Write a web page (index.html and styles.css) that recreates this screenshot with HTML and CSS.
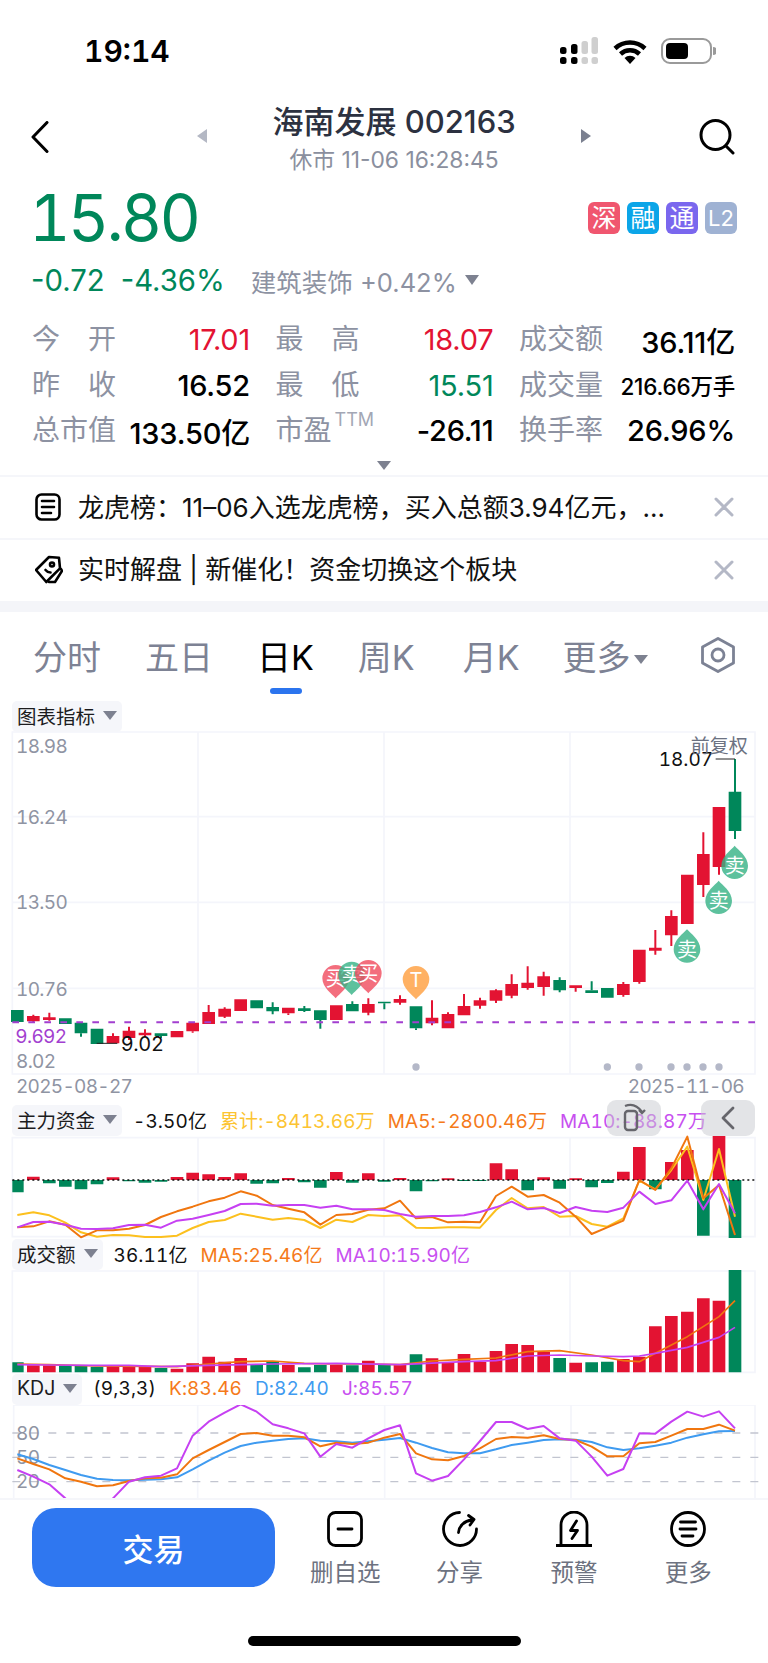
FILE: index.html
```html
<!DOCTYPE html>
<html lang="zh">
<head>
<meta charset="utf-8">
<title>海南发展 002163</title>
<link rel="stylesheet" href="styles.css">
</head>
<body>
<div class="page">
  <header class="status">
    <span class="time">19:14</span>
    <div class="sys">
      <svg class="sig" width="40" height="28" viewBox="0 0 40 28"><g class="k"><rect x="0" y="10" width="6.500" height="7" rx="2.500"/><rect x="11" y="7" width="6.500" height="10" rx="2.500"/><rect x="0" y="20" width="6.500" height="7" rx="2.500"/><rect x="11" y="20" width="6.500" height="7" rx="2.500"/></g><g class="g"><rect x="21.500" y="4" width="6.500" height="13" rx="2.500"/><rect x="31.500" y="0" width="6.500" height="17" rx="2.500"/><rect x="21.500" y="20" width="6.500" height="7" rx="2.500"/><rect x="31.500" y="20" width="6.500" height="7" rx="2.500"/></g></svg>
      <svg class="wifi" width="34" height="25" viewBox="0 0 34 25"><path class="wf" d="M2 9.500a22 22 0 0 1 30 0"/><path class="wf" d="M7.500 15a14 14 0 0 1 19 0"/><path class="k" d="M17 25l-5.500-6a8 8 0 0 1 11 0z"/></svg>
      <svg class="batt" width="55" height="26" viewBox="0 0 55 26"><rect class="bo" x="1" y="1" width="49" height="24" rx="8"/><rect class="k" x="5" y="5" width="22" height="16" rx="4"/><path class="nub" d="M52 9a4 4 0 0 1 0 8z"/></svg>
    </div>
  </header>

  <nav class="nav">
    <svg class="back" width="18" height="32" viewBox="0 0 18 32"><path class="ico" d="M16 1.500L2 16l14 14.500"/></svg>
    <span class="tri-l"></span>
    <div class="titles">
      <div class="title">海南发展 002163</div>
      <div class="sub">休市 11-06 16:28:45</div>
    </div>
    <span class="tri-r"></span>
    <svg class="search" width="36" height="36" viewBox="0 0 36 36"><circle class="ico" cx="16.500" cy="16" r="14.500"/><path class="ico" d="M27 27l7 7"/></svg>
  </nav>

  <section class="quote">
    <div class="price-row">
      <span class="price">15.80</span>
      <div class="badges">
        <span class="badge b1">深</span><span class="badge b2">融</span><span class="badge b3">通</span><span class="badge b4">L2</span>
      </div>
    </div>
    <div class="change-row">
      <span class="chg">-0.72</span><span class="chg">-4.36%</span>
      <span class="sector">建筑装饰 +0.42%</span><span class="tri-d"></span>
    </div>
  </section>

  <section class="stats">
    <div class="stat"><span class="lab wide"><i>今</i><i>开</i></span><span class="val up">17.01</span></div>
    <div class="stat"><span class="lab wide"><i>最</i><i>高</i></span><span class="val up">18.07</span></div>
    <div class="stat"><span class="lab">成交额</span><span class="val">36.11亿</span></div>
    <div class="stat"><span class="lab wide"><i>昨</i><i>收</i></span><span class="val">16.52</span></div>
    <div class="stat"><span class="lab wide"><i>最</i><i>低</i></span><span class="val dn">15.51</span></div>
    <div class="stat"><span class="lab">成交量</span><span class="val small">216.66万手</span></div>
    <div class="stat"><span class="lab">总市值</span><span class="val">133.50亿</span></div>
    <div class="stat"><span class="lab">市盈<sup class="ttm">TTM</sup></span><span class="val">-26.11</span></div>
    <div class="stat"><span class="lab">换手率</span><span class="val">26.96%</span></div>
  </section>
  <div class="expand"><span class="tri-e"></span></div>

  <div class="notice n1">
    <svg class="nicon" width="26" height="28" viewBox="0 0 26 28"><rect class="ico2" x="1.500" y="1.500" width="23" height="25" rx="5"/><path class="ico2" d="M7 8h12M7 14h12M7 20h9"/></svg>
    <span class="ntext">龙虎榜：11–06入选龙虎榜，买入总额3.94亿元，…</span>
    <svg class="close" width="20" height="20" viewBox="0 0 20 20"><path class="cl" d="M2 2l16 16M18 2L2 18"/></svg>
  </div>
  <div class="notice n2">
    <svg class="nicon" width="28" height="30" viewBox="0 0 28 30"><path class="ico2" d="M1 15L14 2l10 .8 1 10.500L11.300 27z"/><path class="ico2" d="M26 14l1 2-7 11h-6"/><circle class="ico2" cx="17" cy="9.500" r="2"/><path class="ico2" d="M10.500 15q2 2.500 5 2.500"/></svg>
    <span class="ntext">实时解盘 | 新催化！资金切换这个板块</span>
    <svg class="close" width="20" height="20" viewBox="0 0 20 20"><path class="cl" d="M2 2l16 16M18 2L2 18"/></svg>
  </div>
  <div class="band"></div>

  <div class="tabs">
    <span class="tab t1">分时</span>
    <span class="tab t2">五日</span>
    <span class="tab t3 on">日K</span>
    <span class="tab t4">周K</span>
    <span class="tab t5">月K</span>
    <span class="tab t6">更多<span class="tri-m"></span></span>
    <svg class="hex" width="34" height="36" viewBox="0 0 34 36"><path class="hx" d="M17 1.500L32.500 10v16L17 34.500 1.500 26V10z"/><circle class="hx" cx="17" cy="18" r="6"/></svg>
  </div>

  <div class="phead h-main"><span class="ctag">图表指标<span class="tri-c"></span></span></div>
  <svg class="chart c-main" width="768" height="342" viewBox="0 96 2304 1026">
    <defs>
      <path id="pd" d="M0 60C-10 48-40 28-40 0A40 40 0 1 1 40 0C40 28 10 48 0 60z"/>
      <path id="pu" d="M0-60C-10-48-40-28-40 0A40 40 0 1 0 40 0C40-28 10-48 0-60z"/>
    </defs>
    <path class="grid" d="M37 96H2265V1122H37zM594 96V1122M1152 96V1122M1710 96V1122M37 350H2265M37 607H2265M37 865H2265"/>
    <text class="ax" x="48" y="160">18.98</text>
    <text class="ax" x="48" y="372">16.24</text>
    <text class="ax" x="48" y="628">13.50</text>
    <text class="ax" x="48" y="887">10.76</text>
    <text class="ax" x="48" y="1104">8.02</text>
    <path class="wr" d="M100 944v22M148 938v24M339 1000v8M387 980v40M435 988v22M578 994v4M626 915v21M674 922v32M865 940v5M1105 895v51M1200 886v28M1296 901v75M1344 937v5M1392 882v36M1440 893v33M1488 868v41M1535 823v72M1583 799v70M1631 815v72M1727 864v11M1870 846v44M1918 846v5M1966 690v74M2014 631v107M2110 397v194M2157 501v23"/>
    <path class="wg" d="M243 1000v10M483 1008v6M818 907v36M913 918v18M961 960v26M1057 904v8M1153 910v18M1248 985v5M1679 832v45M1775 844v27M2205 177v240"/>
    <path class="r" d="M81 948h38v16h-38zM129 952h38v8h-38zM320 1008h38v22h-38zM368 992h38v22h-38zM416 998h38v8h-38zM512 993h38v19h-38zM559 968h38v26h-38zM607 936h38v36h-38zM655 926h38v24h-38zM703 898h38v35h-38zM846 923h38v17h-38zM990 916h38v44h-38zM1086 912h38v26h-38zM1181 897h38v11h-38zM1277 953h38v17h-38zM1325 942h38v43h-38zM1373 918h38v28h-38zM1421 901h38v16h-38zM1469 871h38v31h-38zM1516 852h38v35h-38zM1564 848h38v16h-38zM1612 829h38v32h-38zM1708 856h38v8h-38zM1851 852h38v33h-38zM1899 749h38v97h-38zM1947 743h38v9h-38zM1995 648h38v58h-38zM2043 524h38v148h-38zM2091 462h38v93h-38zM2138 321h38v180h-38z"/>
    <path class="g2" d="M33 930h38v36H33zM177 955h38v17h-38zM224 968h38v32h-38zM272 986h38v46h-38zM464 1000h38v8h-38zM751 901h38v24h-38zM799 921h38v13h-38zM894 925h38v8h-38zM942 931h38v29h-38zM1038 912h38v22h-38zM1134 905h38v5h-38zM1229 919h38v66h-38zM1660 840h38v31h-38zM1756 871h38v8h-38zM1803 864h38v29h-38zM2186 275h38v118h-38z"/>
    <path class="dash" d="M37 967H2265"/>
    <text class="ax pur" x="46" y="1029">9.692</text>
    <path class="tick" d="M290 1030H352M2147 177H2205"/>
    <text class="ax blk big" x="362" y="1052">9.02</text>
    <text class="ax blk" x="1976" y="198">18.07</text>
    <text class="ax fq" x="2072" y="160">前复权</text>
    <g class="dots"><circle cx="1248" cy="1101" r="11"/><circle cx="1822" cy="1101" r="11"/><circle cx="1917" cy="1101" r="11"/><circle cx="2013" cy="1101" r="11"/><circle cx="2061" cy="1101" r="11"/><circle cx="2109" cy="1101" r="11"/><circle cx="2157" cy="1101" r="11"/></g>
    <use class="pin-r" href="#pd" x="1007" y="835"/><text class="pt" x="1007" y="857">买</text>
    <use class="pin-g" href="#pd" x="1055" y="825"/><text class="pt" x="1055" y="847">卖</text>
    <use class="pin-r" href="#pd" x="1105" y="820"/><text class="pt" x="1105" y="842">买</text>
    <use class="pin-o" href="#pd" x="1248" y="838"/><text class="pt" x="1248" y="860">T</text>
    <use class="pin-g" href="#pu" x="2061" y="748"/><text class="pt" x="2061" y="770">卖</text>
    <use class="pin-g" href="#pu" x="2156" y="602"/><text class="pt" x="2156" y="624">卖</text>
    <use class="pin-g" href="#pu" x="2204" y="497"/><text class="pt" x="2204" y="519">卖</text>
  </svg>
  <div class="dates"><span>2025-08-27</span><span>2025-11-06</span></div>

  <div class="phead h-flow">
    <span class="ctag">主力资金<span class="tri-c"></span></span>
    <span class="hv k1">-3.50亿</span>
    <span class="hv yl">累计:-8413.66万</span>
    <span class="hv or">MA5:-2800.46万</span>
    <span class="hv pp">MA10:-88.87万</span>
    <span class="fbtn f1"><svg width="28" height="30" viewBox="0 0 28 30"><rect class="fb" x="5" y="8" width="12" height="19" rx="3"/><path class="fb" d="M5 3q10-4 17 6M19 7l3 3 3-3"/></svg></span>
    <span class="fbtn f2"><svg width="16" height="24" viewBox="0 0 16 24"><path class="fb2" d="M13 2L3 12l10 10"/></svg></span>
  </div>
  <svg class="chart c-flow" width="768" height="101" viewBox="0 141 2304 303">
    <path class="grid" d="M37 143H2265V440H37zM594 143V440M1152 143V440M1710 143V440"/>
    <path class="r" d="M81 260h38v10h-38zM320 262h38v8h-38zM512 261h38v9h-38zM559 248h38v22h-38zM607 253h38v17h-38zM655 261h38v9h-38zM703 250h38v20h-38zM846 264h38v6h-38zM990 246h38v24h-38zM1086 250h38v20h-38zM1181 264h38v6h-38zM1325 265h38v5h-38zM1469 220h38v50h-38zM1516 238h38v32h-38zM1612 262h38v8h-38zM1708 265h38v5h-38zM1851 245h38v25h-38zM1899 171h38v99h-38zM1995 216h38v54h-38zM2043 180h38v90h-38zM2138 138h38v132h-38z"/>
    <path class="g2" d="M37 270h34v37H37zM129 270h38v10h-38zM177 270h38v20h-38zM224 270h38v28h-38zM272 270h38v13h-38zM368 270h38v4h-38zM416 270h38v8h-38zM464 270h38v5h-38zM751 270h38v11h-38zM799 270h38v10h-38zM894 270h38v7h-38zM942 270h38v23h-38zM1038 270h38v8h-38zM1134 270h38v5h-38zM1229 270h38v34h-38zM1277 270h38v4h-38zM1373 270h38v3h-38zM1421 270h38v3h-38zM1564 270h38v31h-38zM1660 270h38v26h-38zM1756 270h38v22h-38zM1803 270h38v9h-38zM1947 270h38v28h-38zM2091 270h38v167h-38zM2186 270h38v174h-38z"/>
    <path class="zero" d="M37 270H2265"/>
    <polyline class="ln ly" points="52,375 100,367 148,376 196,398 243,427 291,440 339,435 387,436 435,441 483,441 531,437 578,414 626,396 674,390 722,371 770,380 818,389 865,384 913,390 961,414 1009,389 1057,396 1105,375 1153,378 1200,376 1248,413 1296,414 1344,412 1392,412 1440,413 1488,360 1535,324 1583,355 1631,351 1679,380 1727,378 1775,402 1822,410 1870,385 1918,272 1966,298 2014,240 2062,170 2110,330 2157,177 2205,380"/>
    <polyline class="ln lo" points="52,412 100,409 148,394 196,404 243,442 291,421 339,421 387,416 435,405 483,381 531,364 578,350 626,334 674,323 722,304 770,317 818,345 865,356 913,367 961,404 1009,375 1057,372 1105,359 1153,355 1200,332 1248,385 1296,381 1344,397 1392,395 1440,397 1488,318 1535,290 1583,320 1631,315 1679,338 1727,380 1775,432 1822,412 1870,392 1918,270 1966,300 2014,235 2062,140 2110,325 2157,285 2205,435"/>
    <polyline class="ln lp" points="52,412 100,396 148,395 196,404 243,416 291,417 339,415 387,405 435,404 483,413 531,392 578,386 626,375 674,363 722,342 770,341 818,347 865,345 913,345 961,353 1009,347 1057,358 1105,358 1153,360 1200,372 1248,380 1296,378 1344,378 1392,376 1440,366 1488,352 1535,335 1583,358 1631,354 1679,369 1727,351 1775,362 1822,366 1870,353 1918,305 1966,342 2014,331 2062,272 2110,358 2157,282 2205,370"/>
  </svg>

  <div class="phead h-vol">
    <span class="ctag">成交额<span class="tri-c"></span></span>
    <span class="hv k1">36.11亿</span>
    <span class="hv or">MA5:25.46亿</span>
    <span class="hv pp">MA10:15.90亿</span>
  </div>
  <svg class="chart c-vol" width="768" height="102" viewBox="0 543 2304 306">
    <path class="grid" d="M37 543H2265V847H37zM594 543V847M1152 543V847M1710 543V847"/>
    <path class="r" d="M81 826h38v21h-38zM129 826h38v21h-38zM320 828h38v19h-38zM368 829h38v18h-38zM416 830h38v17h-38zM512 836h38v11h-38zM559 820h38v27h-38zM607 800h38v47h-38zM655 815h38v32h-38zM703 804h38v43h-38zM846 825h38v22h-38zM990 825h38v22h-38zM1086 812h38v35h-38zM1181 823h38v24h-38zM1277 805h38v42h-38zM1325 818h38v29h-38zM1373 792h38v55h-38zM1421 816h38v31h-38zM1469 783h38v64h-38zM1516 762h38v85h-38zM1564 765h38v82h-38zM1612 785h38v62h-38zM1708 818h38v29h-38zM1851 807h38v40h-38zM1899 800h38v47h-38zM1947 709h38v138h-38zM1995 678h38v169h-38zM2043 665h38v182h-38zM2091 625h38v222h-38zM2138 632h38v215h-38z"/>
    <path class="g2" d="M37 817h34v30H37zM177 826h38v21h-38zM224 828h38v19h-38zM272 830h38v17h-38zM464 834h38v13h-38zM751 823h38v24h-38zM799 815h38v32h-38zM894 832h38v15h-38zM942 825h38v22h-38zM1038 826h38v21h-38zM1134 825h38v22h-38zM1229 793h38v54h-38zM1660 804h38v43h-38zM1756 817h38v30h-38zM1803 815h38v32h-38zM2186 540h38v307h-38z"/>
    <polyline class="ln lo th" points="52,822 148,824 291,828 435,829 531,830 626,822 722,815 818,813 913,820 1009,822 1105,822 1200,824 1296,813 1392,808 1488,804 1583,785 1679,782 1775,795 1870,812 1918,815 1966,790 2062,740 2157,680 2205,632"/>
    <polyline class="ln lp th" points="52,824 148,825 291,826 387,826 483,830 626,826 818,822 1009,820 1200,824 1392,815 1488,812 1583,798 1679,795 1775,798 1870,800 1918,798 1966,790 2062,772 2157,742 2205,712"/>
  </svg>

  <div class="phead h-kdj">
    <span class="ctag">KDJ<span class="tri-c"></span></span>
    <span class="hv k1">(9,3,3)</span>
    <span class="hv or">K:83.46</span>
    <span class="hv bl">D:82.40</span>
    <span class="hv pp">J:85.57</span>
  </div>
  <svg class="chart c-kdj" width="768" height="93" viewBox="0 105 2304 279">
    <path class="grid" d="M41 105H2265V384M41 105V384M593 105V384M1154 105V384M1713 105V384"/>
    <path class="kd" d="M37 189H2304M37 262H2304M37 335H2304"/>
    <text class="ax" x="48" y="209">80</text>
    <text class="ax" x="48" y="282">50</text>
    <text class="ax" x="48" y="355">20</text>
    <polyline class="ln lb" points="52,253 100,267 148,285 196,300 243,315 291,326 339,330 387,331 435,329 483,328 531,322 578,298 626,272 674,248 722,228 770,218 818,212 865,207 913,205 961,212 1009,214 1057,218 1105,214 1153,209 1200,204 1248,218 1296,234 1344,247 1392,250 1440,250 1488,238 1535,225 1583,218 1631,210 1679,208 1727,209 1775,216 1822,232 1870,240 1918,235 1966,227 2014,218 2062,203 2110,193 2157,184 2205,183"/>
    <polyline class="ln lo" points="52,265 100,282 148,298 196,325 243,335 291,349 339,346 387,333 435,325 483,323 531,313 578,265 626,240 674,216 722,192 770,189 818,197 865,197 913,202 961,229 1009,218 1057,222 1105,218 1153,203 1200,192 1248,250 1296,268 1344,271 1392,258 1440,235 1488,207 1535,201 1583,203 1631,196 1679,207 1727,210 1775,230 1822,259 1870,259 1918,220 1966,216 2014,197 2062,177 2110,177 2157,164 2205,182"/>
    <polyline class="ln lp" points="52,300 100,320 148,343 196,385 243,420 291,430 339,385 387,335 435,322 483,317 531,295 578,197 626,155 674,128 722,103 770,125 818,163 865,175 913,190 961,260 1009,222 1057,233 1105,205 1153,180 1200,166 1248,310 1296,332 1344,318 1392,268 1440,213 1488,156 1535,156 1583,177 1631,168 1679,205 1727,212 1775,260 1822,317 1870,297 1918,190 1966,191 2014,155 2062,125 2110,140 2157,124 2205,175"/>
  </svg>

  <footer class="bar">
    <button class="trade">交易</button>
    <div class="acts">
      <div class="act">
        <svg width="36" height="36" viewBox="0 0 36 36"><rect class="ab" x="1.500" y="1.500" width="33" height="33" rx="7"/><path class="ab" d="M11 18h14"/></svg>
        <span>删自选</span>
      </div>
      <div class="act">
        <svg width="36" height="36" viewBox="0 0 36 36"><path class="ab" d="M17.500 1.500A16.500 16.500 0 1 0 34.500 18"/><path class="ab" d="M16.500 21.500C17 15 22 10 30 9M26.500 4.500l5.500 4-4 5.500"/></svg>
        <span>分享</span>
      </div>
      <div class="act">
        <svg width="36" height="36" viewBox="0 0 36 36"><path class="ab" d="M5 34V14a13 13 0 0 1 26 0v20M0 34.500h36"/><path class="ab" d="M20.500 10l-6 9.500h7l-5.500 8"/></svg>
        <span>预警</span>
      </div>
      <div class="act">
        <svg width="36" height="36" viewBox="0 0 36 36"><circle class="ab" cx="18" cy="18" r="16.500"/><path class="ab" d="M10.500 11h15M10 18h16M12 25h11"/></svg>
        <span>更多</span>
      </div>
    </div>
  </footer>
  <div class="home-wrap"><span class="home"></span></div>
</div>
</body>
</html>
```

FILE: styles.css
```css
* { box-sizing: border-box; }
html, body { margin: 0; padding: 0; background: #fff; }
body { font-family: Inter, "Noto Sans CJK SC", sans-serif; color: #000; }
.page { width: 768px; height: 1663px; overflow: hidden; position: relative; background: #fff; }
i { font-style: normal; }
svg { display: block; flex: none; }

/* status bar */
.status { height: 102px; display: flex; align-items: center; justify-content: space-between; padding: 0 52px 0 84px; }
.time { font-size: 30px; font-weight: 600; font-variant-numeric: tabular-nums; }
.sys { display: flex; align-items: center; }
.sig { margin-right: 13px; }
.wifi { margin-right: 14px; }
.k { fill: #000; }
.g { fill: #cfcfcf; }
.wf { fill: none; stroke: #000; stroke-width: 4.500; }
.bo { fill: none; stroke: #9a9a9a; stroke-width: 2; }
.nub { fill: #9a9a9a; }

/* nav */
.nav { height: 76px; display: flex; align-items: flex-start; padding-left: 31px; }
.ico { fill: none; stroke: #000; stroke-width: 3; stroke-linecap: round; stroke-linejoin: round; }
.back { margin-top: 19px; }
.tri-l { width: 0; height: 0; margin: 27px 0 0 148px; border: 7px solid transparent; border-left-width: 0; border-right: 10px solid #b4b8c4; }
.titles { width: 374px; text-align: center; }
.title { font-size: 31px; line-height: 40px; font-weight: 500; color: #2c3140; }
.sub { font-size: 22.800px; line-height: 36px; color: #8a8f9e; }
.tri-r { width: 0; height: 0; margin-top: 27px; border: 7px solid transparent; border-right-width: 0; border-left: 10px solid #7b8090; }
.search { margin: 17px 0 0 108px; }

/* quote */
.quote { padding: 0 31px 0 31px; }
.price-row { height: 80px; display: flex; align-items: center; justify-content: space-between; }
.price { font-size: 64px; line-height: 80px; color: #00875a; letter-spacing: -2.800px; margin-left: -2px; font-variant-numeric: tabular-nums; }
.badges { display: flex; gap: 7px; }
.badge { width: 32px; height: 32px; border-radius: 6px; color: #fff; font-size: 25px; line-height: 32px; text-align: center; }
.b1 { background: #f0566f; }
.b2 { background: #0ba5e8; }
.b3 { background: #7a67ee; }
.b4 { background: #9fb2d3; font-size: 22px; }
.change-row { height: 44px; display: flex; align-items: center; }
.chg { font-size: 29.300px; color: #00875a; margin-right: 16px; }
.sector { font-size: 25.500px; color: #8d92a2; margin-left: 10px; }
.tri-d { width: 0; height: 0; margin-left: 8px; border: 7px solid transparent; border-bottom-width: 0; border-top: 10px solid #7d8190; }

/* stats */
.stats { padding: 15px 33px 0 32px; display: grid; grid-template-columns: repeat(3, 1fr); column-gap: 27.500px; grid-auto-rows: 45.500px; }
.stat { display: flex; align-items: center; justify-content: space-between; }
.stat:not(:nth-child(3n)) .val { margin-right: -2px; }
.lab { font-size: 28px; color: #8d92a2; line-height: 45px; }
.lab.wide { width: 84px; display: flex; justify-content: space-between; }
.ttm { font-size: 18px; line-height: 0; vertical-align: 14px; margin-left: 3px; color: #a3a7b5; }
.val { font-size: 29px; font-weight: 500; letter-spacing: -.2px; }
.val.small { font-size: 22.500px; }
.val.up { color: #e31332; font-weight: 400; }
.val.dn { color: #00875a; font-weight: 400; }
.expand { height: 23.500px; display: flex; justify-content: center; padding-top: 7px; border-bottom: 2px solid #f5f6fa; }
.tri-e { width: 0; height: 0; border: 7px solid transparent; border-bottom-width: 0; border-top: 9px solid #7d8190; }

/* notices */
.notice { display: flex; align-items: center; padding-left: 35px; padding-right: 34px; }
.n1 { height: 63px; padding-bottom: 1px; border-bottom: 2px solid #f5f6fa; }
.n2 { height: 61px; padding-bottom: 2px; }
.ico2 { fill: none; stroke: #000; stroke-width: 2.600; stroke-linejoin: round; stroke-linecap: round; }
.ntext { flex: 1; font-size: 26px; white-space: nowrap; color: #111; padding-bottom: 4px; }
.n1 .ntext { margin-left: 17px; }
.n2 .ntext { margin-left: 15px; }
.cl { stroke: #b4b8c6; stroke-width: 3; stroke-linecap: round; fill: none; }
.band { height: 11px; background: #f4f5f9; }

/* tabs */
.tabs { height: 88px; display: flex; align-items: center; position: relative; padding: 0 0 2px 33px; }
.tab { font-size: 34px; color: #7d8294; white-space: nowrap; }
.tab.on { color: #000; position: relative; }
.tab.on::after { content: ""; position: absolute; left: 13px; top: 57px; width: 32px; height: 6px; border-radius: 3px; background: #2b74ee; }
.t2 { margin-left: 44px; }
.t3 { margin-left: 44px; }
.t4 { margin-left: 44px; }
.t5 { margin-left: 48px; }
.t6 { margin-left: 43px; }
.tri-m { display: inline-block; vertical-align: 6px; margin-left: 3px; border: 7px solid transparent; border-bottom-width: 0; border-top: 9px solid #7d8190; }
.hex { margin-left: auto; margin-right: 33px; }
.hx { fill: none; stroke: #7c8294; stroke-width: 2.800; stroke-linejoin: round; }

/* chart heads */
.phead { display: flex; align-items: center; padding-left: 12px; position: relative; white-space: nowrap; }
.ctag { height: 31px; display: flex; align-items: center; padding: 0 5px 2px 5px; background: #f5f6fa; border-radius: 5px; font-size: 19.500px; color: #1c1c1e; }
.tri-c { margin-left: 8px; border: 7px solid transparent; border-bottom-width: 0; border-top: 9px solid #7d8190; }
.hv { font-size: 19px; letter-spacing: .1px; margin: 0 0 2px 13px; font-variant-numeric: tabular-nums; }
.k1 { color: #111; margin-left: 11px; }
.yl { color: #fcc432; }
.or { color: #f57a1a; }
.pp { color: #c850f0; }
.bl { color: #3f9bf0; }
.h-main { height: 32px; }
.h-flow { height: 33px; }
.h-vol { height: 33px; }
.h-kdj { height: 32px; }
.fbtn { position: absolute; top: -4px; height: 36px; width: 54px; background: rgba(200, 202, 208, .5); border-radius: 9px; display: flex; align-items: center; justify-content: center; }
.f1 { left: 607px; }
.f2 { left: 701px; }
.fb { fill: none; stroke: #66666c; stroke-width: 2.400; }
.fb2 { fill: none; stroke: #66666c; stroke-width: 2.800; stroke-linecap: round; stroke-linejoin: round; }

/* charts */
.chart { overflow: hidden; }
.c-main, .c-flow, .c-vol { overflow: visible; }
.grid { fill: none; stroke: #f4f5fb; stroke-width: 5; }
.ax { font-size: 57px; fill: #8f94a3; font-family: Inter, "Noto Sans CJK SC", sans-serif; font-variant-numeric: tabular-nums; letter-spacing: -2px; }
.pur { fill: #a23fd0; }
.blk { fill: #111; letter-spacing: 0; }
.big { font-size: 60px; letter-spacing: -1px; }
.fq { fill: #6c7282; letter-spacing: 0; }
.tick { stroke: #222; stroke-width: 3; fill: none; }
.r { fill: #e31332; }
.g2 { fill: #00875a; }
.wr { stroke: #e31332; stroke-width: 6; fill: none; }
.wg { stroke: #00875a; stroke-width: 6; fill: none; }
.dash { stroke: #a23fd0; stroke-width: 6; stroke-dasharray: 20 28; fill: none; }
.zero { stroke: #111; stroke-width: 4; stroke-dasharray: 6 9; fill: none; }
.kd { stroke: #c2c5d0; stroke-width: 4; stroke-dasharray: 24 30; fill: none; }
.dots { fill: #b4b8c8; }
.pin-r { fill: #f04a5c; opacity: .8; }
.pin-g { fill: #35b184; opacity: .8; }
.pin-o { fill: #ff9d3c; opacity: .8; }
.pt { font-size: 60px; fill: #fff; text-anchor: middle; font-family: Inter, "Noto Sans CJK SC", sans-serif; }
.ln { fill: none; stroke-width: 6; stroke-linejoin: round; }
.ln.th { stroke-width: 5; }
.ly { stroke: #fcc01e; }
.lo { stroke: #f0760f; }
.lp { stroke: #c640f2; }
.lb { stroke: #3f9bf0; }
.dates { height: 30px; display: flex; align-items: flex-start; justify-content: space-between; padding: 0 24px 0 16px; font-size: 19px; line-height: 26px; color: #8f94a3; font-variant-numeric: tabular-nums; letter-spacing: -.7px; }

/* bottom */
.bar { height: 138px; position: relative; background: #fff; display: flex; border-top: 2px solid #f5f6fa; padding: 8px 0 0 32px; }
.trade { width: 243px; height: 79px; border: 0; border-radius: 24px; background: #2f77f0; color: #fff; font: 500 31px Inter, "Noto Sans CJK SC", sans-serif; }
.acts { display: grid; grid-template-columns: repeat(4, 114.400px); margin-left: 13px; }
.act { display: flex; flex-direction: column; align-items: center; padding-top: 3px; font-size: 23.500px; color: #6d7280; }
.act span { line-height: 44px; margin-top: 4px; }
.ab { fill: none; stroke: #000; stroke-width: 2.800; stroke-linecap: round; stroke-linejoin: round; }
.home-wrap { display: flex; justify-content: center; }
.home { width: 273px; height: 10px; border-radius: 5px; background: #000; }
```
